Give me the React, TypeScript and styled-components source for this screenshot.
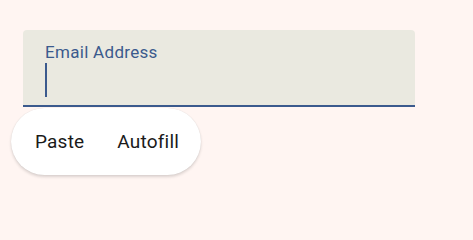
import React from "react";
import styled, { createGlobalStyle } from "styled-components";

const GlobalStyle = createGlobalStyle`
  body {
    margin: 0;
    background: #fff5f2;
    font-family: Roboto, "Liberation Sans", sans-serif;
  }
`;

const Page = styled.div`
  padding: 30px 0 0 23px;
  height: 210px;
  box-sizing: border-box;
  overflow: hidden;
`;

const FieldWrap = styled.div`
  position: relative;
  width: 392px;
`;

const Field = styled.div`
  height: 77px;
  padding: 12px 22px 0;
  box-sizing: border-box;
  background: #eae9e0;
  border-radius: 4px 4px 0 0;
  border-bottom: 2px solid #3b5a8d;
`;

const Label = styled.div`
  font-size: 17px;
  line-height: 20px;
  letter-spacing: 0.3px;
  color: #3b5a8d;
`;

const Caret = styled.div`
  width: 2px;
  height: 34px;
  margin-top: 1px;
  background: #3b5a8d;
`;

const Menu = styled.div`
  position: absolute;
  top: calc(100% + 1px);
  left: -12px;
  width: 190px;
  height: 67px;
  box-sizing: border-box;
  padding: 0 24px;
  display: flex;
  align-items: center;
  gap: 33px;
  background: #ffffff;
  border-radius: 34px;
  box-shadow: 0 2px 3px rgba(0, 0, 0, 0.14), 0 0 1px rgba(0, 0, 0, 0.12);
`;

const MenuItem = styled.span`
  font-size: 19px;
  line-height: 22px;
  letter-spacing: 0.2px;
  color: #1a1a1a;
`;

export default function App() {
  return (
    <>
      <GlobalStyle />
      <Page>
        <FieldWrap>
          <Field>
            <Label>Email Address</Label>
            <Caret />
          </Field>
          <Menu>
            <MenuItem>Paste</MenuItem>
            <MenuItem>Autofill</MenuItem>
          </Menu>
        </FieldWrap>
      </Page>
    </>
  );
}
